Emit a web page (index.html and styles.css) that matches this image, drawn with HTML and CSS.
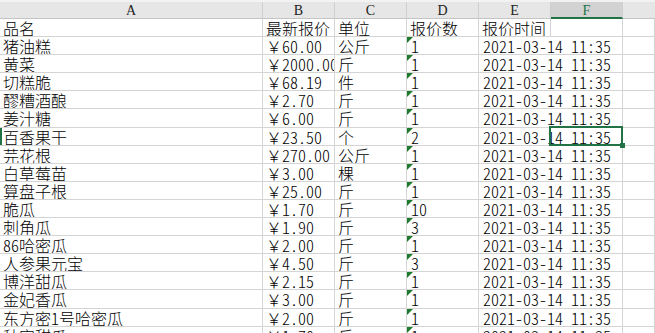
FILE: index.html
```html
<!DOCTYPE html>
<html lang="zh-CN">
<head>
<meta charset="utf-8">
<title>报价表</title>
<link rel="stylesheet" href="styles.css">
</head>
<body>
<div class="sheet">
  <div class="grid">
    <div class="row">
      <div class="h">A</div><div class="h">B</div><div class="h">C</div><div class="h">D</div><div class="h">E</div><div class="h h-sel">F</div><div class="h h-last"></div>
    </div>
    <div class="row">
      <div class="c">品名</div><div class="c">最新报价</div><div class="c">单位</div><div class="c">报价数</div><div class="c">报价时间</div><div class="c"></div><div class="c"></div>
    </div>
    <div class="row"><div class="c">猪油糕</div><div class="c"><span class="yen">￥</span>60.00</div><div class="c">公斤</div><div class="c tri">1</div><div class="c span2">2021-03-14 11:35</div><div class="c"></div></div>
    <div class="row"><div class="c">黄菜</div><div class="c"><span class="yen">￥</span>2000.00</div><div class="c">斤</div><div class="c tri">1</div><div class="c span2">2021-03-14 11:35</div><div class="c"></div></div>
    <div class="row"><div class="c">切糕脆</div><div class="c"><span class="yen">￥</span>68.19</div><div class="c">件</div><div class="c tri">1</div><div class="c span2">2021-03-14 11:35</div><div class="c"></div></div>
    <div class="row"><div class="c">醪糟酒酿</div><div class="c"><span class="yen">￥</span>2.70</div><div class="c">斤</div><div class="c tri">1</div><div class="c span2">2021-03-14 11:35</div><div class="c"></div></div>
    <div class="row"><div class="c">姜汁糖</div><div class="c"><span class="yen">￥</span>6.00</div><div class="c">斤</div><div class="c tri">1</div><div class="c span2">2021-03-14 11:35</div><div class="c"></div></div>
    <div class="row"><div class="c c-rowsel">百香果干</div><div class="c"><span class="yen">￥</span>23.50</div><div class="c">个</div><div class="c tri">2</div><div class="c span2">2021-03-14 11:35</div><div class="c"></div></div>
    <div class="row"><div class="c">芫花根</div><div class="c"><span class="yen">￥</span>270.00</div><div class="c">公斤</div><div class="c tri">1</div><div class="c span2">2021-03-14 11:35</div><div class="c"></div></div>
    <div class="row"><div class="c">白草莓苗</div><div class="c"><span class="yen">￥</span>3.00</div><div class="c">棵</div><div class="c tri">1</div><div class="c span2">2021-03-14 11:35</div><div class="c"></div></div>
    <div class="row"><div class="c">算盘子根</div><div class="c"><span class="yen">￥</span>25.00</div><div class="c">斤</div><div class="c tri">1</div><div class="c span2">2021-03-14 11:35</div><div class="c"></div></div>
    <div class="row"><div class="c">脆瓜</div><div class="c"><span class="yen">￥</span>1.70</div><div class="c">斤</div><div class="c tri">10</div><div class="c span2">2021-03-14 11:35</div><div class="c"></div></div>
    <div class="row"><div class="c">刺角瓜</div><div class="c"><span class="yen">￥</span>1.90</div><div class="c">斤</div><div class="c tri">3</div><div class="c span2">2021-03-14 11:35</div><div class="c"></div></div>
    <div class="row"><div class="c">86哈密瓜</div><div class="c"><span class="yen">￥</span>2.00</div><div class="c">斤</div><div class="c tri">1</div><div class="c span2">2021-03-14 11:35</div><div class="c"></div></div>
    <div class="row"><div class="c">人参果元宝</div><div class="c"><span class="yen">￥</span>4.50</div><div class="c">斤</div><div class="c tri">3</div><div class="c span2">2021-03-14 11:35</div><div class="c"></div></div>
    <div class="row"><div class="c">博洋甜瓜</div><div class="c"><span class="yen">￥</span>2.15</div><div class="c">斤</div><div class="c tri">1</div><div class="c span2">2021-03-14 11:35</div><div class="c"></div></div>
    <div class="row"><div class="c">金妃香瓜</div><div class="c"><span class="yen">￥</span>3.00</div><div class="c">斤</div><div class="c tri">1</div><div class="c span2">2021-03-14 11:35</div><div class="c"></div></div>
    <div class="row"><div class="c">东方密1号哈密瓜</div><div class="c"><span class="yen">￥</span>2.00</div><div class="c">斤</div><div class="c tri">1</div><div class="c span2">2021-03-14 11:35</div><div class="c"></div></div>
    <div class="row"><div class="c">秋宝甜瓜</div><div class="c"><span class="yen">￥</span>1.70</div><div class="c">斤</div><div class="c tri">1</div><div class="c span2">2021-03-14 11:35</div><div class="c"></div></div>
  </div>
  <div class="selection"><span class="handle"></span></div>
</div>
</body>
</html>
```
FILE: styles.css
```css
html, body {
  margin: 0;
  padding: 0;
  background: #ffffff;
  overflow: hidden;
}

.sheet {
  position: relative;
  width: 655px;
  height: 333px;
  overflow: hidden;
  border-top: 2px solid #f2f2f2;
  box-sizing: border-box;
}

.grid {
  display: grid;
  grid-template-columns: 263px 72px 72px 72px 72px 72px 1fr;
  grid-template-rows: 17px;
  grid-auto-rows: 18.1px;
}

.row {
  display: contents;
}

.h {
  background: #e6e6e6;
  border-right: 1px solid #cfcfcf;
  border-bottom: 1px solid #c4c4c4;
  box-sizing: border-box;
  font-family: "Liberation Serif", serif;
  font-size: 14px;
  line-height: 17px;
  color: #222;
  text-align: center;
}

.h-sel {
  background: #d2d2d2;
  color: #217346;
  border-bottom: 2px solid #217346;
}

.h-last {
  border-right: none;
}

.c {
  position: relative;
  border-right: 1px solid #d4d4d4;
  border-bottom: 1px solid #d4d4d4;
  box-sizing: border-box;
  padding-left: 3px;
  white-space: nowrap;
  overflow: hidden;
  font-family: "Noto Sans CJK SC", sans-serif;
  font-feature-settings: "hwid";
  font-weight: 300;
  font-size: 16px;
  line-height: 18px;
  color: #000;
}

.yen {
  font-feature-settings: normal;
}

.span2 {
  grid-column: span 2;
  padding-left: 4px;
}

.c.tri {
  padding-left: 4px;
}

.tri::before {
  content: "";
  position: absolute;
  left: 0;
  top: 0;
  border-top: 6px solid #1e7b2e;
  border-right: 6px solid transparent;
}

.c-rowsel {
  box-shadow: inset 2px 0 0 #217346;
}

.selection {
  position: absolute;
  left: 549px;
  top: 124px;
  width: 74px;
  height: 20px;
  border: 2px solid #217346;
  box-sizing: border-box;
}

.handle {
  position: absolute;
  right: -4px;
  bottom: -4px;
  width: 5px;
  height: 5px;
  background: #217346;
}
```
